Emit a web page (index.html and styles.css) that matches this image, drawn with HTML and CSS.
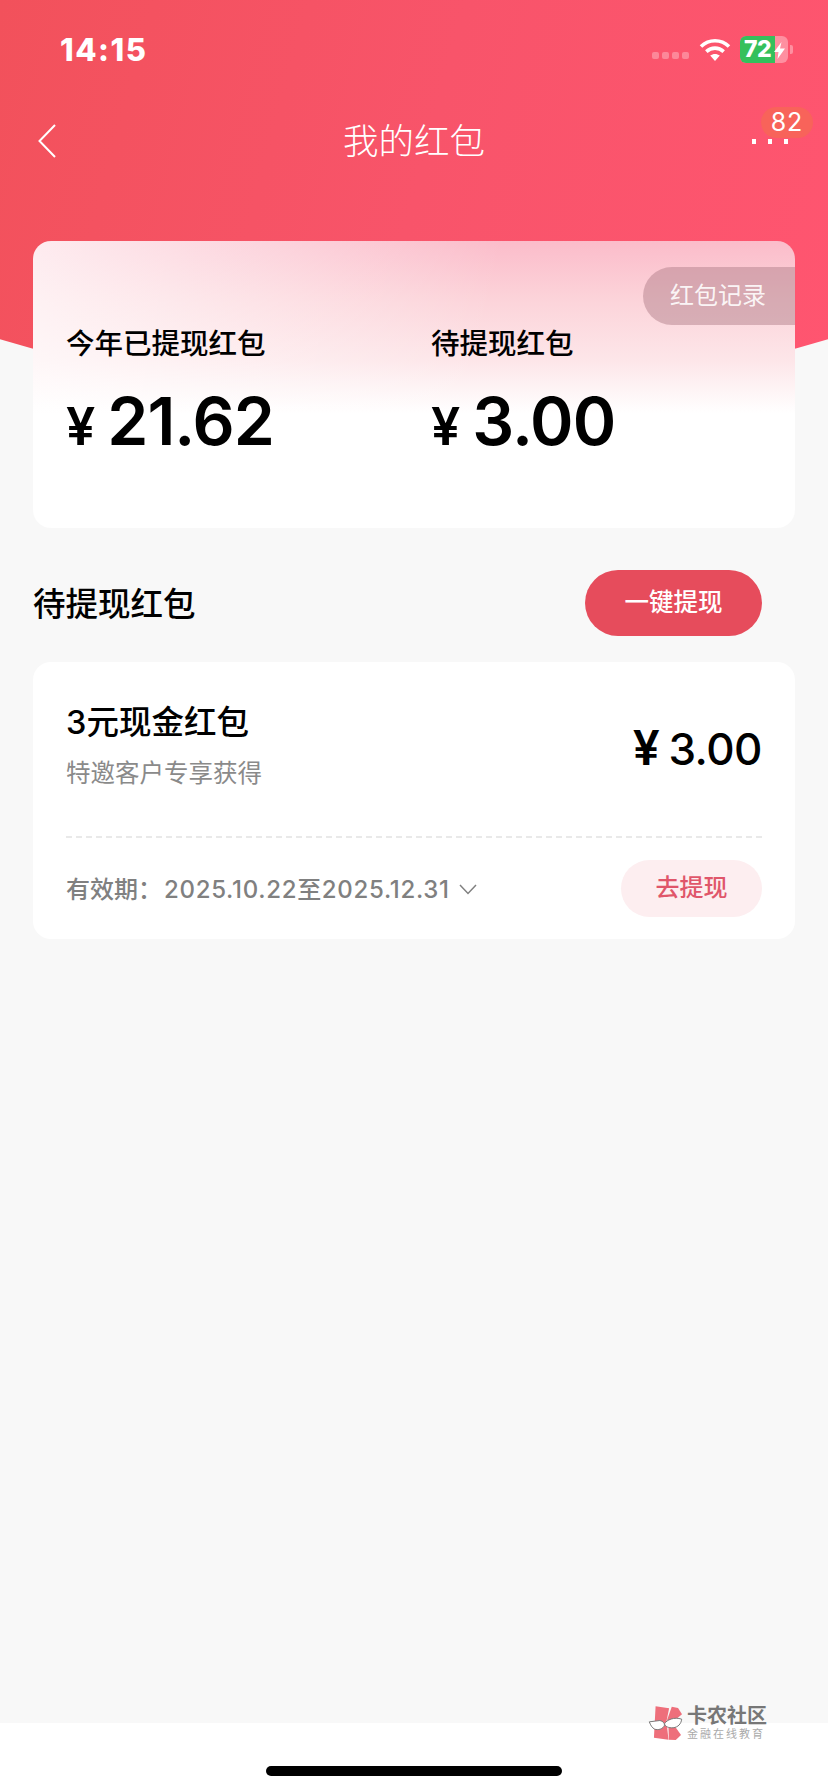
FILE: index.html
```html
<!DOCTYPE html>
<html lang="zh-CN">
<head>
<meta charset="UTF-8">
<meta name="viewport" content="width=device-width, initial-scale=1.0">
<title>我的红包</title>
<link rel="stylesheet" href="styles.css">
</head>
<body>
<div class="page">
    <!-- 顶部红色区域 -->
    <div class="hero">
        <div class="status-bar">
            <div class="time">14:15</div>
            <div class="status-icons">
                <div class="signal"><span></span><span></span><span></span><span></span></div>
                <svg class="wifi" width="32" height="25" viewBox="0 0 32 25">
                    <path d="M2 9.5C10 1.8 22 1.8 30 9.5" fill="none" stroke="#fff" stroke-width="3.6"/>
                    <path d="M7.3 14.6C12.4 9.9 19.6 9.9 24.7 14.6" fill="none" stroke="#fff" stroke-width="3.6"/>
                    <path d="M11.2 18.6C14 16.3 18 16.3 20.8 18.6L16 24Z" fill="#fff"/>
                </svg>
                <div class="battery">
                    <div class="battery-fill">72</div>
                    <svg class="bolt" width="11" height="17" viewBox="0 0 11 17"><path d="M7.5 0L0 10H4.5L3.5 17L11 6.5H6Z" fill="#fff"/></svg>
                </div>
                <div class="battery-nub"></div>
            </div>
        </div>
        <div class="nav">
            <svg class="back" width="18" height="34" viewBox="0 0 18 34"><path d="M17 1L1.5 17L17 33" fill="none" stroke="#fff" stroke-width="2"/></svg>
            <div class="nav-title">我的红包</div>
            <div class="more"><span></span><span></span><span></span></div>
            <div class="badge">82</div>
        </div>
    </div>

    <!-- 汇总卡片 -->
    <div class="summary">
        <a href="#" class="record-btn">红包记录</a>
        <div class="summary-col">
            <div class="summary-label">今年已提现红包</div>
            <div class="summary-amount"><span class="yen">¥</span>21.62</div>
        </div>
        <div class="summary-col">
            <div class="summary-label">待提现红包</div>
            <div class="summary-amount"><span class="yen">¥</span>3.00</div>
        </div>
    </div>

    <div class="section-head">
        <div class="section-title">待提现红包</div>
        <a href="#" class="withdraw-all">一键提现</a>
    </div>

    <!-- 红包列表 -->
    <div class="packet">
        <div class="packet-top">
            <div>
                <div class="packet-name">3元现金红包</div>
                <div class="packet-desc">特邀客户专享获得</div>
            </div>
            <div class="packet-amount"><span class="yen-small">¥</span>3.00</div>
        </div>
        <div class="packet-bottom">
            <div class="packet-date">
                <span class="date-label">有效期：</span><span class="date-range">2025.10.22至2025.12.31</span>
                <svg class="chevron" width="18" height="11" viewBox="0 0 18 11"><path d="M1 1L9 9.5L17 1" fill="none" stroke="#808080" stroke-width="1.5"/></svg>
            </div>
            <a href="#" class="withdraw-one">去提现</a>
        </div>
    </div>

    <div class="spacer"></div>

    <div class="home-area">
        <div class="home-bar"></div>
    </div>

    <!-- 水印 -->
    <div class="watermark">
        <svg class="wm-logo" width="37" height="38" viewBox="140 70 110 115">
            <path d="M165 77L206 83L198 122L204 178L160 172Z" fill="#ee6f7b"/>
            <path d="M214 78L233 82L245 101L212 128L200 118Z" fill="#ee6f7b"/>
            <path d="M204 140L221 134L242 164L226 179L205 178Z" fill="#ee6f7b"/>
            <path d="M146 124L178 120C188 122 192 128 192 134C188 146 172 150 162 146C154 142 150 134 146 124Z" fill="#fff" stroke="#777" stroke-width="3"/>
            <path d="M192 130C198 118 222 108 244 116C242 130 234 140 218 142C204 143 194 138 192 130Z" fill="#fff" stroke="#777" stroke-width="3"/>
        </svg>
        <div>
            <div class="wm-name">卡农社区</div>
            <div class="wm-sub">金融在线教育</div>
        </div>
    </div>
</div>
</body>
</html>
```

FILE: styles.css
```css
* {
    box-sizing: border-box;
}
body {
    margin: 0;
    font-family: Inter, "Noto Sans CJK SC", sans-serif;
    color: #000;
    background-color: #f8f8f8;
}
a {
    text-decoration: none;
}
.page {
    position: relative;
    display: flex;
    flex-direction: column;
    height: 1792px;
    overflow: hidden;
}
/* 顶部 */
.hero {
    position: relative;
    height: 241px;
    color: #fff;
}
/* 弧形背景 */
.hero::before {
    content: "";
    position: absolute;
    top: 0;
    left: 0;
    width: 100%;
    height: 400px;
    background: linear-gradient(105deg, #f2515b 0%, #f8546a 50%, #ff5570 100%);
    clip-path: circle(1440px at 50% -1040px);
}
.status-bar {
    position: relative;
    display: flex;
    justify-content: space-between;
    align-items: center;
    height: 50px;
    margin-top: 24px;
    padding: 0 35px 0 60px;
}
.time {
    font-size: 31px;
    font-weight: 800;
    letter-spacing: 1.5px;
}
.status-icons {
    display: flex;
    align-items: center;
}
.signal {
    display: flex;
    gap: 3px;
    margin: 13px 10px 0 0;
}
.signal span {
    width: 7px;
    height: 7px;
    border-radius: 2px;
    background-color: rgba(255, 255, 255, 0.3);
}
.wifi {
    margin-right: 9px;
}
.battery {
    position: relative;
    display: flex;
    width: 48px;
    height: 27px;
    border-radius: 6px;
    overflow: hidden;
    background-color: rgba(255, 255, 255, 0.35);
}
.battery-fill {
    width: 35px;
    padding-left: 4px;
    background-color: #35c05c;
    font-size: 23px;
    font-weight: 800;
    line-height: 27px;
    letter-spacing: -0.5px;
}
.bolt {
    position: absolute;
    top: 6px;
    left: 34px;
}
.battery-nub {
    width: 3px;
    height: 9px;
    margin-left: 2px;
    border-radius: 0 2px 2px 0;
    background-color: rgba(255, 255, 255, 0.35);
}
.nav {
    position: relative;
    display: flex;
    justify-content: center;
    align-items: center;
    height: 50px;
    margin-top: 42px;
}
.back {
    position: absolute;
    left: 38px;
    top: 8px;
}
.nav-title {
    margin-top: -5px;
    font-size: 35.5px;
    font-weight: 300;
}
.more {
    position: absolute;
    top: 23px;
    left: 752px;
    display: flex;
    gap: 12px;
}
.more span {
    width: 4px;
    height: 5px;
    background-color: #fff;
}
.badge {
    position: absolute;
    top: -9px;
    left: 761px;
    width: 52px;
    height: 31px;
    border-radius: 16px;
    background-color: #f8635a;
    font-size: 25px;
    line-height: 31px;
    letter-spacing: 1px;
    text-align: center;
}
/* 汇总卡片 */
.summary {
    position: relative;
    display: grid;
    grid-template-columns: 365px 1fr;
    height: 287px;
    margin: 0 33px;
    padding: 83px 0 0 33px;
    border-radius: 18px;
    background:
        linear-gradient(100deg, rgba(255, 255, 255, 0.7) 0%, rgba(255, 255, 255, 0) 58%),
        linear-gradient(180deg, #fbbcca 0, #fcd4da 60px, #fde6e9 120px, #fff 172px);
}
.record-btn {
    position: absolute;
    top: 26px;
    right: 0;
    width: 152px;
    height: 58px;
    padding-left: 27px;
    border-radius: 29px 0 0 29px;
    background-color: rgba(170, 120, 130, 0.45);
    color: rgba(255, 255, 255, 0.9);
    font-size: 24px;
    line-height: 58px;
}
.summary-label {
    font-size: 28.5px;
    font-weight: 500;
    line-height: 40px;
}
.summary-amount {
    display: flex;
    align-items: baseline;
    margin-top: 18px;
    font-size: 66px;
    font-weight: 600;
    line-height: 78px;
    letter-spacing: -1px;
}
.yen {
    margin-right: 13px;
    font-size: 52px;
    font-weight: 600;
}
/* 待提现 */
.section-head {
    display: flex;
    justify-content: space-between;
    align-items: center;
    margin: 42px 66px 26px 33px;
}
.section-title {
    margin-top: -4px;
    font-size: 32.5px;
    font-weight: 500;
}
.withdraw-all {
    width: 177px;
    height: 66px;
    border-radius: 33px;
    background-color: #e64c5c;
    color: #fff;
    font-size: 24.5px;
    font-weight: 500;
    line-height: 64px;
    text-align: center;
}
.packet {
    height: 277px;
    margin: 0 33px;
    padding: 0 33px 0 33px;
    border-radius: 18px;
    background-color: #fff;
}
.packet-top {
    display: flex;
    justify-content: space-between;
    align-items: center;
    height: 176px;
    padding-bottom: 4px;
    border-bottom: 2px dashed #e9e9e9;
}
.packet-name {
    margin-top: -3px;
    font-size: 32.5px;
    font-weight: 500;
    line-height: 46px;
}
.packet-desc {
    margin-top: 9px;
    font-size: 24.5px;
    line-height: 36px;
    color: #8a8a8a;
}
.packet-amount {
    display: flex;
    align-items: baseline;
    font-size: 44px;
    font-weight: 500;
    letter-spacing: -0.5px;
}
.yen-small {
    margin-right: 9px;
    font-size: 48px;
    font-weight: 600;
}
.packet-bottom {
    display: flex;
    justify-content: space-between;
    align-items: center;
    padding-top: 22px;
}
.packet-date {
    display: flex;
    align-items: center;
    margin-top: -2px;
    font-size: 24px;
    font-weight: 500;
    color: #808080;
}
.date-label {
    width: 98px;
}
.date-range {
    letter-spacing: 0.7px;
}
.chevron {
    margin: 4px 0 0 9px;
}
.withdraw-one {
    width: 141px;
    height: 57px;
    border-radius: 29px;
    background-color: #fdeef0;
    color: #e0566a;
    font-size: 24px;
    font-weight: 500;
    line-height: 55px;
    text-align: center;
}
.spacer {
    flex: 1;
}
/* 底部 */
.home-area {
    display: flex;
    justify-content: center;
    height: 69px;
    padding-top: 43px;
    background-color: #fff;
}
.home-bar {
    width: 296px;
    height: 10px;
    border-radius: 5px;
    background-color: #000;
}
/* 水印 */
.watermark {
    position: absolute;
    top: 1704px;
    left: 647px;
    display: flex;
    gap: 3px;
}
.wm-name {
    margin-top: 1px;
    font-size: 20px;
    font-weight: 700;
    line-height: 22px;
    color: #777;
}
.wm-sub {
    font-size: 11px;
    line-height: 14px;
    letter-spacing: 2px;
    color: #aaa;
}
```
